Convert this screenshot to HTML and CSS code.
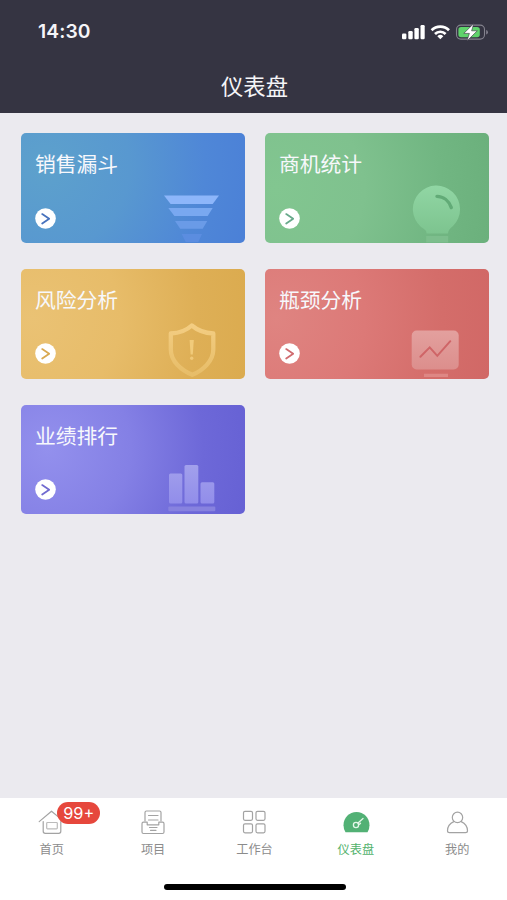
FILE: index.html
```html
<!DOCTYPE html>
<html lang="zh-CN">
<head>
<meta charset="utf-8">
<title>仪表盘</title>
<link rel="stylesheet" href="styles.css">
</head>
<body>
<div class="app">
  <header class="header">
    <div class="status">
      <span class="time">14:30</span>
      <svg class="status-icons" width="90" height="20" viewBox="0 0 90 20">
        <g fill="#fff">
          <rect x="2" y="12.5" width="4.4" height="5.8" rx="1.2"/>
          <rect x="8.3" y="10" width="4.4" height="8.3" rx="1.2"/>
          <rect x="14.4" y="7" width="4.4" height="11.3" rx="1.2"/>
          <rect x="20.5" y="4" width="4.2" height="14.3" rx="1.2"/>
        </g>
        <g fill="none" stroke="#fff" stroke-width="2.7">
          <path d="M31.6 9.3a12.2 12.2 0 0 1 17.4 0"/>
          <path d="M35 13a7.4 7.4 0 0 1 10.6 0"/>
        </g>
        <path d="M40.3 18.3l-3-3.1a4.3 4.3 0 0 1 6 0z" fill="#fff"/>
        <rect x="56.5" y="4.1" width="28" height="14" rx="4.3" fill="none" stroke="#85838f" stroke-width="1.1"/>
        <rect x="58.4" y="6" width="21.4" height="10.2" rx="2.7" fill="#5fd36b"/>
        <path d="M86.2 9v4.4q1.7-.5 1.7-2.2t-1.700-2.200z" fill="#85838f"/>
        <path d="M73.800 2.500l-10 9.900h5.600l-2.500 7.600 10.400-10.200h-5.700z" fill="#fff" stroke="#353442" stroke-width=".6"/>
      </svg>
    </div>
    <h1 class="title">仪表盘</h1>
  </header>

  <main class="cards">
    <a class="card blue">
      <div class="info"><h2>销售漏斗</h2>
        <svg class="go" viewBox="0 0 21 21"><circle cx="10.5" cy="10.5" r="10.3"/><path d="M7.2 6.1l7 4.7-7 4.8"/></svg></div>
      <svg class="art" viewBox="0 0 60 60">
        <path d="M3 12.5h55l-6.3 8.5H9.6z" fill="#8db6fa"/>
        <path d="M7.3 25h44.4l-5 8H13.4z" fill="#79a8f0"/>
        <path d="M14 38h32.3l-4.6 7.7H19.2z" fill="#6a9be7"/>
        <path d="M20.7 51H41l-3.7 8H24.7z" fill="#5b8de0"/>
      </svg>
    </a>
    <a class="card green">
      <div class="info"><h2>商机统计</h2>
        <svg class="go" viewBox="0 0 21 21"><circle cx="10.5" cy="10.5" r="10.3"/><path d="M7.2 6.1l7 4.7-7 4.8"/></svg></div>
      <svg class="art" viewBox="0 0 60 60">
        <defs><linearGradient id="bulb" x2="0" y2="1"><stop stop-color="#91d6a4"/><stop offset="1" stop-color="#7dc48f"/></linearGradient></defs>
        <path d="M21.5 50.5c0-3.5-2-4-5.5-6.5A23.6 23.6 0 1 1 48 43c-3 2.6-5 4.5-5 7.5z" fill="url(#bulb)"/>
        <path d="M21.2 53h22v6.5h-22z" fill="#7dbe8d"/>
        <path d="M32 13.4c6.500.1 12 4.500 14.300 11.200" fill="none" stroke="#62ab77" stroke-width="3.400" stroke-linecap="round"/>
      </svg>
    </a>
    <a class="card gold">
      <div class="info"><h2>风险分析</h2>
        <svg class="go" viewBox="0 0 21 21"><circle cx="10.5" cy="10.5" r="10.3"/><path d="M7.2 6.1l7 4.7-7 4.8"/></svg></div>
      <svg class="art" viewBox="0 0 60 60">
        <defs><linearGradient id="shield" x2="0" y2="1"><stop stop-color="#f3cd82"/><stop offset="1" stop-color="#e7bd68"/></linearGradient></defs>
        <path d="M30.8 6.5q-7.8 7.3-21 8v16c0 12 10.7 21 21.5 25.3C42 51.500 52.300 42 52.300 30.500v-16q-13-.7-21.500-8z" fill="none" stroke="url(#shield)" stroke-width="4.3" stroke-linejoin="round"/>
        <path d="M28.600 21h4.200l-1 14.500h-2.200z" fill="#f1cb7b"/><circle cx="30.700" cy="39.300" r="1.700" fill="#f0c878"/>
      </svg>
    </a>
    <a class="card red">
      <div class="info"><h2>瓶颈分析</h2>
        <svg class="go" viewBox="0 0 21 21"><circle cx="10.5" cy="10.5" r="10.3"/><path d="M7.2 6.1l7 4.7-7 4.8"/></svg></div>
      <svg class="art" viewBox="0 0 60 60">
        <defs><linearGradient id="screen" x2="0" y2="1"><stop stop-color="#e3a09e"/><stop offset="1" stop-color="#dc8e8c"/></linearGradient></defs>
        <rect x="6.700" y="11.500" width="47" height="39" rx="5" fill="url(#screen)"/>
        <path d="M15.400 37.700l9.300-9.300 7.600 8.400 13-14.600" fill="none" stroke="#cf6567" stroke-width="2" stroke-linecap="round"/>
        <path d="M19 54.700h24v3.300H19z" fill="#de8784"/>
      </svg>
    </a>
    <a class="card purple">
      <div class="info"><h2>业绩排行</h2>
        <svg class="go" viewBox="0 0 21 21"><circle cx="10.5" cy="10.5" r="10.3"/><path d="M7.2 6.1l7 4.7-7 4.8"/></svg></div>
      <svg class="art" viewBox="0 0 60 60">
        <defs><linearGradient id="bars" gradientUnits="userSpaceOnUse" x1="0" y1="11" x2="0" y2="50"><stop stop-color="#a2a0ec"/><stop offset="1" stop-color="#918dea"/></linearGradient></defs>
        <g fill="url(#bars)"><rect x="8" y="19.500" width="13.300" height="30" rx="1.500"/><rect x="23.500" y="11" width="13.800" height="38.500" rx="1.500"/><rect x="39.500" y="28.300" width="13.800" height="21.200" rx="1.500"/></g>
        <rect x="7.300" y="52.500" width="47" height="4.700" rx="1" fill="#8782df"/>
      </svg>
    </a>
  </main>

  <footer class="footer">
    <nav class="tabs">
      <a class="tab">
        <span class="icon">
          <svg width="28" height="28" viewBox="0 0 28 28"><path d="M1.200 13.600L13.500 3.200l9 7.400M5.200 13.500v9.800q0 2 2 2h13.600q2 0 2-2v-9.800"/><rect x="8.700" y="14.500" width="10.600" height="6.300" rx=".8" stroke="#bbb"/></svg>
          <span class="badge">99+</span>
        </span>
        <span>首页</span>
      </a>
      <a class="tab">
        <span class="icon"><svg width="28" height="28" viewBox="0 0 28 28"><path d="M6 13V4.500q0-1.500 1.500-1.500h13q1.500 0 1.500 1.500V13M9.500 7.500h9.500M9.500 12h9.500M10.500 19.500h7.500M11.500 22.300h5.500"/><path d="M4.500 14.200h3.700v2.600h11.600v-2.600h3.700q1.500 0 1.500 1.500V24q0 1.500-1.500 1.500h-19Q3 25.500 3 24v-8.300q0-1.500 1.500-1.500z"/></svg></span>
        <span>项目</span>
      </a>
      <a class="tab">
        <span class="icon"><svg width="28" height="28" viewBox="0 0 28 28"><rect x="3.500" y="3.300" width="9" height="9" rx="1.500"/><rect x="16" y="3.300" width="9" height="9" rx="1.500"/><rect x="3.500" y="15.800" width="9" height="9" rx="1.500"/><rect x="16" y="15.800" width="9" height="9" rx="1.500"/></svg></span>
        <span>工作台</span>
      </a>
      <a class="tab active">
        <span class="icon"><svg width="28" height="28" viewBox="0 0 28 28"><path d="M3.500 24.300Q1.500 21.500 1.500 17.300C1.500 9.800 7.300 4 14.500 4S27.500 9.800 27.500 17.300q0 4.200-2 7z" fill="#52b175" stroke="none"/><g stroke="#e4f7e9" stroke-width="1.300"><circle cx="14" cy="17" r="2.600"/><path d="M16 15l5-4.600M17.500 16.300l1-1"/></g></svg></span>
        <span>仪表盘</span>
      </a>
      <a class="tab">
        <span class="icon"><svg width="28" height="28" viewBox="0 0 28 28"><circle cx="14.500" cy="9.400" r="5.200"/><path d="M10.800 13.600C6.500 15.500 4.500 19 4.500 22.800q0 1.900 2 1.900h16q2 0 2-1.900c0-3.800-2.200-7.300-6.300-9.200"/></svg></span>
        <span>我的</span>
      </a>
    </nav>
    <div class="home-bar"></div>
  </footer>
</div>
</body>
</html>
```

FILE: styles.css
```css
* { box-sizing: border-box; }
body {
  margin: 0;
  font-family: "Noto Sans CJK SC", sans-serif;
}
h1, h2 { margin: 0; font-weight: 400; }
.app {
  height: 900px;
  display: flex;
  flex-direction: column;
  background: #ebeaef;
  overflow: hidden;
}
.header {
  height: 113.400px;
  background: #353442;
  color: #f5f5f8;
}
.status {
  height: 62px;
  padding: 0 18px 0 38px;
  display: flex;
  justify-content: space-between;
  align-items: center;
}
.time {
  font: 600 19.300px/24px Inter, sans-serif;
  letter-spacing: .1px;
}
.status-icons { margin-right: -1px; margin-top: -1px; }
.title {
  font-size: 22.300px;
  line-height: 30px;
  margin-top: 8px;
  padding-left: 2px;
  text-align: center;
}
.cards {
  flex: 1;
  display: grid;
  grid-template-columns: 224px 224px;
  grid-auto-rows: 109.800px;
  column-gap: 20px;
  row-gap: 25.800px;
  padding: 20px 0 0 21.200px;
}
.card {
  display: flex;
  justify-content: space-between;
  border-radius: 5px;
  overflow: hidden;
  color: #f7f8fc;
}
.info {
  display: flex;
  flex-direction: column;
  padding: 15px 0 0 13.800px;
}
.info h2 {
  font-size: 20.800px;
  line-height: 30px;
  white-space: nowrap;
}
.go {
  width: 21px;
  height: 21px;
  margin-top: 29.500px;
  fill: #fff;
}
.go path {
  fill: none;
  stroke: currentColor;
  stroke-width: 1.800;
  stroke-linecap: round;
  stroke-linejoin: round;
}
.art {
  width: 60px;
  height: 60px;
  align-self: flex-end;
  margin-right: 24px;
}
.blue { background: radial-gradient(circle at 10% 30%, #5da1cc 0, #5898d0 40%, #4f87d7 75%, #4b80d7 100%); }
.green { background: radial-gradient(circle at 5% 50%, #82c690 0, #7fc18e 40%, #71b682 75%, #6bb07c 100%); }
.gold { background: radial-gradient(circle at 5% 45%, #eac274 0, #e7bc69 40%, #deaf56 75%, #dbab4f 100%); }
.red { background: radial-gradient(circle at 5% 45%, #df8481 0, #dc7977 40%, #d46d6a 75%, #d16866 100%); }
.purple { background: radial-gradient(circle at 12% 40%, #9390ed 0, #8480e5 40%, #6d68d8 75%, #6661d4 100%); }
.blue .go { color: #4772bd; }
.green .go { color: #68a98b; }
.gold .go { color: #d9a951; }
.red .go { color: #d06c70; }
.purple .go { color: #716bd0; }
.footer {
  height: 102.500px;
  background: #fff;
}
.tabs {
  height: 86px;
  padding-left: 1px;
  margin-right: -1px;
  display: grid;
  grid-template-columns: repeat(5, 1fr);
}
.tab {
  display: flex;
  flex-direction: column;
  align-items: center;
  padding-top: 10px;
  font-size: 12.200px;
  line-height: 18px;
  color: #8b8b8b;
}
.icon {
  position: relative;
  height: 32px;
}
.icon svg {
  display: block;
  fill: none;
  stroke: #a3a3a3;
  stroke-width: 1.200;
  stroke-linecap: round;
  stroke-linejoin: round;
}
.active { color: #52b26c; }
.badge {
  position: absolute;
  left: 19.500px;
  top: -6px;
  width: 43px;
  height: 22.500px;
  border-radius: 12px;
  background: #e6473c;
  color: #fff;
  font: 16.300px/23px Inter, sans-serif;
  text-align: center;
}
.home-bar {
  width: 182px;
  height: 6px;
  margin: 0 auto;
  border-radius: 3px;
  background: #000;
  transform: translateX(1px);
}
```
